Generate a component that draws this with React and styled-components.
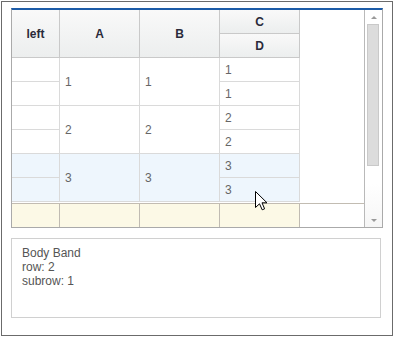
import React from 'react';
import styled, { createGlobalStyle } from 'styled-components';

const GlobalStyle = createGlobalStyle`
  html, body {
    margin: 0;
    padding: 0;
    background: #fff;
  }
  body {
    font-family: "Liberation Sans", Arial, sans-serif;
    font-size: 12px;
  }
`;

const Frame = styled.div`
  position: relative;
  margin: 1px 0 0 1px;
  width: 392px;
  height: 335px;
  box-sizing: border-box;
  border: 1px solid #6b6b6b;
  padding: 6px 9px 0 9px;
`;

const Grid = styled.div`
  display: flex;
  width: 372px;
  height: 220px;
  box-sizing: border-box;
  border: 1px solid #aaaaaa;
  border-top: 2px solid #1d5ca8;
`;

const Main = styled.div`
  flex: 1;
  display: flex;
  flex-direction: column;
`;

const Columns = `
  display: grid;
  grid-template-columns: 48px 80px 80px 80px;
  width: 288px;
`;

const Header = styled.div`
  ${Columns}
  grid-template-rows: 24px 24px;
`;

const HeadCell = styled.div`
  grid-row: ${p => (p.$tall ? 'span 2' : 'auto')};
  display: flex;
  align-items: center;
  justify-content: center;
  box-sizing: border-box;
  border-right: 1px solid #c9c9c9;
  border-bottom: 1px solid #c9c9c9;
  background: linear-gradient(#f9f9f9, #eceeee);
  color: #2a2a3a;
  font-weight: bold;
  font-size: 12px;
`;

const Body = styled.div`
  height: 144px;
  border-bottom: 1px solid #fff;
`;

const RowGroup = styled.div`
  ${Columns}
  grid-template-rows: 24px 24px;
  background: ${p => (p.$hover ? '#eef6fd' : '#fff')};
`;

const Cell = styled.div`
  grid-row: ${p => (p.$merged ? 'span 2' : 'auto')};
  display: flex;
  align-items: center;
  padding-left: 5px;
  box-sizing: border-box;
  border-right: 1px solid #dadada;
  border-bottom: 1px solid #dadada;
  color: #666;
  font-size: 12px;
`;

const Footer = styled.div`
  height: 24px;
  box-sizing: border-box;
  border-top: 1px solid #c2bcb2;
`;

const FooterRow = styled.div`
  ${Columns}
  height: 23px;
`;

const FooterCell = styled.div`
  box-sizing: border-box;
  border-right: 1px solid #c0bbb2;
  background: #fcf9e6;
`;

const Scrollbar = styled.div`
  width: 18px;
  box-sizing: border-box;
  border-left: 1px solid #b9b9b9;
  display: flex;
  flex-direction: column;
  background: linear-gradient(#fff 80%, #f6f6f6);
`;

const Arrow = styled.div`
  height: 14px;
  display: flex;
  align-items: center;
  justify-content: center;
  &::before {
    content: '';
    border-left: 3px solid transparent;
    border-right: 3px solid transparent;
    ${p => (p.$down ? 'border-top: 3px solid #9a9a9a;' : 'border-bottom: 3px solid #9a9a9a;')}
  }
`;

const Track = styled.div`
  flex: 1;
  display: flex;
  flex-direction: column;
`;

const Thumb = styled.div`
  height: 142px;
  margin: 0 3px 0 2px;
  box-sizing: border-box;
  border: 1px solid #c9c9c9;
  background: #dcdcdc;
`;

const InfoBox = styled.div`
  margin-top: 10px;
  width: 370px;
  height: 80px;
  box-sizing: border-box;
  border: 1px solid #d0d0d0;
  padding: 7px 10px;
  color: #555;
  font-size: 12px;
  line-height: 14px;
`;

const Cursor = styled.svg`
  position: absolute;
  left: 253px;
  top: 189px;
`;

const rows = [1, 2, 3];

export default function App() {
  return (
    <>
      <GlobalStyle />
      <Frame>
        <Grid>
          <Main>
            <Header>
              <HeadCell $tall>left</HeadCell>
              <HeadCell $tall>A</HeadCell>
              <HeadCell $tall>B</HeadCell>
              <HeadCell>C</HeadCell>
              <HeadCell>D</HeadCell>
            </Header>
            <Body>
              {rows.map(n => (
                <RowGroup key={n} $hover={n === 3}>
                  <Cell />
                  <Cell $merged>{n}</Cell>
                  <Cell $merged>{n}</Cell>
                  <Cell>{n}</Cell>
                  <Cell />
                  <Cell>{n}</Cell>
                </RowGroup>
              ))}
            </Body>
            <Footer>
              <FooterRow>
                <FooterCell />
                <FooterCell />
                <FooterCell />
                <FooterCell />
              </FooterRow>
            </Footer>
          </Main>
          <Scrollbar>
            <Arrow />
            <Track>
              <Thumb />
            </Track>
            <Arrow $down />
          </Scrollbar>
        </Grid>
        <InfoBox>
          Body Band<br />
          row: 2<br />
          subrow: 1
        </InfoBox>
        <Cursor width="13" height="20" viewBox="0 0 13 20">
          <path
            d="M0.5 0.5 L0.5 16.5 L4.5 12.8 L7.2 18.8 L9.6 17.8 L7 11.8 L12 11.8 Z"
            fill="#fff"
            stroke="#000"
            strokeWidth="1"
            strokeLinejoin="miter"
          />
        </Cursor>
      </Frame>
    </>
  );
}
